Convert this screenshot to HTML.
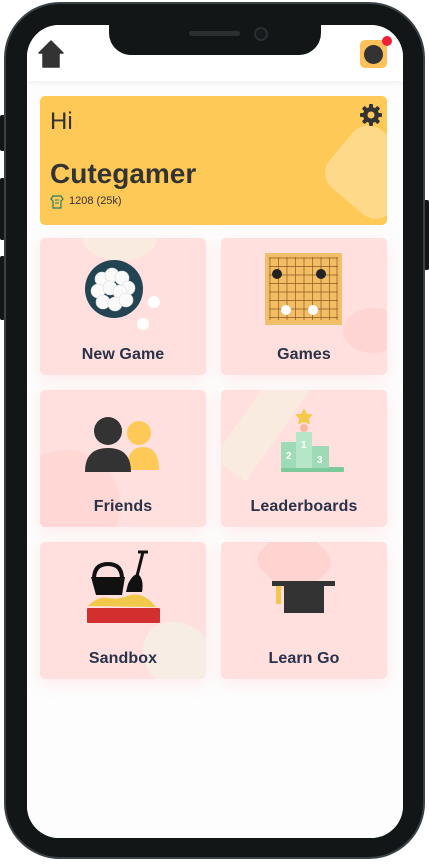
<!DOCTYPE html>
<html><head><meta charset="utf-8"><style>
*{margin:0;padding:0;box-sizing:border-box}
body{width:429px;height:866px;background:#fff;position:relative;overflow:hidden;font-family:"Liberation Sans","DejaVu Sans",sans-serif}
.frame{position:absolute;left:4px;top:2px;width:421px;height:857px;border-radius:56px;background:#121617;border:2px solid #3b4246}
.btn{position:absolute;background:#121617;width:5px;border-radius:2px}
.screen{position:absolute;left:27px;top:25px;width:376px;height:813px;border-radius:32px;background:#fff;overflow:hidden}
.notch{position:absolute;left:82px;top:0;width:212px;height:30px;background:#121617;border-radius:0 0 22px 22px}
.hdr{position:absolute;left:0;top:0;width:376px;height:56px;background:#fff;box-shadow:0 2px 6px rgba(0,0,0,.06)}
.content{position:absolute;left:0;top:56px;width:376px;height:760px;background:#fdfdfd}
.card{position:absolute;left:13px;top:71px;width:347px;height:129px;background:#fec957;border-radius:5px;overflow:hidden}
.tile{position:absolute;width:166px;height:137px;background:#ffe0df;border-radius:5px;overflow:hidden;box-shadow:0 4px 16px rgba(255,190,190,.3)}
.lbl{position:absolute;left:0;right:0;bottom:11px;text-align:center;font-size:16px;font-weight:bold;color:#2a3248;letter-spacing:.1px}
.tile svg{position:absolute;left:0;top:0}
</style></head><body>
<div class="btn" style="left:0;top:115px;height:36px"></div>
<div class="btn" style="left:0;top:178px;height:62px"></div>
<div class="btn" style="left:0;top:256px;height:64px"></div>
<div class="btn" style="left:424px;top:200px;height:70px"></div>
<div class="frame"></div>
<div class="screen">
 <div class="content"></div>
 <div class="hdr">
  <svg style="position:absolute;left:11px;top:15px" width="26" height="28" viewBox="0 0 26 28"><path d="M13 1 L25 13 L21 13 L21 27 L5 27 L5 13 L1 13 Z" fill="#333" stroke="#333" stroke-width="1.5" stroke-linejoin="round"/></svg>
  <div style="position:absolute;left:333px;top:15px;width:27px;height:28px;background:#fec05a;border-radius:5px"></div>
  <div style="position:absolute;left:337px;top:20px;width:19px;height:19px;background:#333;border-radius:50%"></div>
  <div style="position:absolute;left:355px;top:11px;width:10px;height:10px;background:#f0203c;border-radius:50%"></div>
 </div>
 <div class="notch">
  <div style="position:absolute;left:80px;top:6px;width:51px;height:5px;background:#2a2f32;border-radius:3px"></div>
  <div style="position:absolute;left:145px;top:2px;width:14px;height:14px;border:2px solid #2a2f32;border-radius:50%;background:#151a1c"></div>
 </div>
 <div class="card">
  <div style="position:absolute;left:292px;top:38px;width:80px;height:76px;background:#ffd98a;border-radius:20px;transform:rotate(40deg)"></div>
  <div style="position:absolute;left:10px;top:12px;font-size:24px;color:#333;font-weight:300">Hi</div>
  <div style="position:absolute;left:10px;top:62px;font-size:28px;color:#333;font-weight:bold">Cutegamer</div>
  <svg style="position:absolute;left:10px;top:98px" width="14" height="15" viewBox="0 0 14 15"><path d="M3 2h8l2 3-2 2v7H3V7L1 5z" fill="#fec957" stroke="#2a7a6a" stroke-width="1.2"/><path d="M5 6h4M5 9h4" stroke="#2a7a6a"/></svg>
  <div style="position:absolute;left:29px;top:99px;font-size:11px;color:#333">1208 (25k)</div>
  <svg style="position:absolute;left:319px;top:7px" width="24" height="24" viewBox="0 0 24 24"><g fill="#333"><circle cx="12" cy="12" r="8"/><rect x="10" y="1" width="4" height="22" rx="1"/><rect x="10" y="1" width="4" height="22" rx="1" transform="rotate(45 12 12)"/><rect x="10" y="1" width="4" height="22" rx="1" transform="rotate(90 12 12)"/><rect x="10" y="1" width="4" height="22" rx="1" transform="rotate(135 12 12)"/></g><circle cx="12" cy="12" r="3.5" fill="#fec957"/></svg>
 </div>

 <div class="tile" style="left:13px;top:213px">
  <div style="position:absolute;left:42px;top:-25px;width:75px;height:48px;background:#f9ebe0;border-radius:50%"></div>
  <svg width="166" height="137">
   <circle cx="74" cy="51" r="29" fill="#234452"/>
   <g fill="#fafafa" stroke="#ddd" stroke-width=".6"><circle cx="62" cy="41" r="7"/><circle cx="72" cy="37" r="7"/><circle cx="82" cy="40" r="7"/><circle cx="88" cy="50" r="7"/><circle cx="58" cy="53" r="7"/><circle cx="70" cy="50" r="7"/><circle cx="80" cy="54" r="7"/><circle cx="63" cy="64" r="7"/><circle cx="75" cy="66" r="7"/><circle cx="86" cy="62" r="7"/></g>
   <circle cx="114" cy="64" r="6" fill="#fff"/><circle cx="103" cy="86" r="6" fill="#fff"/>
  </svg>
  <div class="lbl">New Game</div>
 </div>
 <div class="tile" style="left:194px;top:213px">
  <div style="position:absolute;left:122px;top:70px;width:60px;height:45px;background:#ffd5d3;border-radius:50%"></div>
  <svg width="166" height="137">
   <rect x="45" y="16" width="75" height="70" fill="#f3bd66" stroke="#f0c16c" stroke-width="2"/>
   <g stroke="#8a5a20" stroke-width=".7">
    <path d="M48 20h69M48 28.5h69M48 37h69M48 45.5h69M48 54h69M48 62.5h69M48 71h69M48 79.5h69"/>
    <path d="M49 19v63M57.5 19v63M66 19v63M74.5 19v63M83 19v63M91.5 19v63M100 19v63M108.5 19v63M116 19v63"/>
   </g>
   <circle cx="56" cy="36" r="5" fill="#222"/><circle cx="100" cy="36" r="5" fill="#222"/>
   <circle cx="65" cy="72" r="5" fill="#fff"/><circle cx="92" cy="72" r="5" fill="#fff"/>
  </svg>
  <div class="lbl">Games</div>
 </div>
 <div class="tile" style="left:13px;top:365px">
  <div style="position:absolute;left:-30px;top:60px;width:110px;height:110px;background:#ffd7d5;border-radius:50%"></div>
  <svg width="166" height="137">
   <circle cx="99" cy="43" r="12" fill="#fec957"/>
   <path d="M87 80 Q87 57 103 57 Q119 57 119 80Z" fill="#fec957"/>
   <circle cx="68" cy="41" r="14" fill="#333"/>
   <path d="M45 82 Q45 58 68 58 Q91 58 91 82Z" fill="#333"/>
  </svg>
  <div class="lbl">Friends</div>
 </div>
 <div class="tile" style="left:194px;top:365px">
  <div style="position:absolute;left:20px;top:-20px;width:40px;height:110px;background:#f9ebe0;transform:rotate(35deg)"></div>
  <svg width="166" height="137">
   <path d="M83 20l2.5 4.5 5 .5-3.5 3.5 1 5-5-2.5-5 2.5 1-5-3.5-3.5 5-.5z" fill="#f6c94a" stroke="#f6c94a" stroke-width="1.5" stroke-linejoin="round"/>
   <circle cx="83" cy="38" r="4" fill="#f6b9a0"/>
   <rect x="60" y="77" width="63" height="5" rx="1" fill="#7cca9a"/>
   <rect x="60" y="52" width="16" height="26" fill="#9edab5"/>
   <rect x="75" y="42" width="16" height="36" fill="#b5e6c8"/>
   <rect x="91" y="56" width="17" height="22" fill="#9edab5"/>
   <g fill="#fff" font-size="10" font-weight="bold" font-family="Liberation Sans"><text x="65" y="69">2</text><text x="80" y="58">1</text><text x="96" y="73">3</text></g>
  </svg>
  <div class="lbl">Leaderboards</div>
 </div>
 <div class="tile" style="left:13px;top:517px">
  <div style="position:absolute;left:100px;top:83px;width:80px;height:65px;background:#f8ede5;border-radius:50%;transform:rotate(40deg)"></div>
  <svg width="166" height="137">
   <path d="M54 37 Q54 22 68 22 Q82 22 82 37" fill="none" stroke="#111" stroke-width="4"/>
   <path d="M51 35h34l-3 18H56z" fill="#111"/>
   <path d="M98 10h10" stroke="#111" stroke-width="3"/><path d="M103 10l-6 24" stroke="#111" stroke-width="3"/>
   <path d="M88 42 Q94 30 99 33 Q104 38 102 50 L86 50z" fill="#111"/>
   <path d="M48 64 Q58 54 68 56 Q80 58 90 53 Q104 50 116 65z" fill="#f2c84b"/>
   <rect x="47" y="66" width="73" height="15" rx="1" fill="#d32f2f"/>
  </svg>
  <div class="lbl">Sandbox</div>
 </div>
 <div class="tile" style="left:194px;top:517px">
  <div style="position:absolute;left:42px;top:-10px;width:62px;height:58px;background:#ffd3d0;border-radius:14px;transform:rotate(45deg)"></div>
  <svg width="166" height="137">
   <rect x="51" y="39" width="63" height="5" fill="#333"/>
   <rect x="63" y="43" width="40" height="28" fill="#333"/>
   <rect x="55" y="44" width="5" height="18" fill="#f2c84b"/>
  </svg>
  <div class="lbl">Learn Go</div>
 </div>
</div>
</body></html>
